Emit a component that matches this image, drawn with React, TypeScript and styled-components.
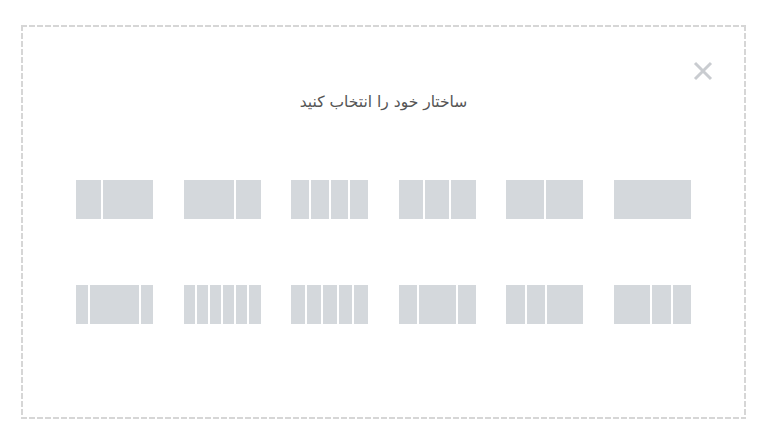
import * as React from 'react'
import styled, { createGlobalStyle } from 'styled-components'

// column spans for each preset, left to right
const layouts: number[][] = [
  [1, 2],
  [2, 1],
  [1, 1, 1, 1],
  [1, 1, 1],
  [1, 1],
  [1],
  [1, 4, 1],
  [1, 1, 1, 1, 1, 1],
  [1, 1, 1, 1, 1],
  [1, 2, 1],
  [1, 1, 2],
  [2, 1, 1],
]

const Global = createGlobalStyle`
  html, body {
    margin: 0;
    padding: 0;
    background: #fff;
  }
  body {
    font-family: "DejaVu Sans", "Liberation Sans", Arial, sans-serif;
  }
`

const dash = '#d6d6d6'

const Frame = styled.div`
  position: relative;
  box-sizing: border-box;
  width: 725px;
  height: 394px;
  margin: 25px 0 0 21px;
  padding: 67px 2px 2px;
  background:
    repeating-linear-gradient(90deg, ${dash} 0 6px, transparent 6px 8px) left top / 100% 2px no-repeat,
    repeating-linear-gradient(90deg, ${dash} 0 6px, transparent 6px 8px) left bottom / 100% 2px no-repeat,
    repeating-linear-gradient(180deg, ${dash} 0 6px, transparent 6px 8px) left top / 2px 100% no-repeat,
    repeating-linear-gradient(180deg, ${dash} 0 6px, transparent 6px 8px) right top / 2px 100% no-repeat;
`

const Title = styled.div`
  direction: rtl;
  text-align: center;
  font-size: 15.5px;
  line-height: 20px;
  color: #555;
`

const Close = styled.button`
  position: absolute;
  top: 36px;
  right: 32px;
  width: 22px;
  height: 20px;
  padding: 0;
  border: 0;
  background: none;
  cursor: pointer;
  display: flex;
  align-items: center;
  justify-content: center;
`

const Grid = styled.div`
  display: grid;
  grid-template-columns: repeat(6, 77px);
  column-gap: 30.6px;
  row-gap: 66px;
  justify-content: center;
  margin-top: 68px;
`

const Tile = styled.div`
  display: flex;
  gap: 2px;
  height: 39px;
  cursor: pointer;
`

const Col = styled.div<{ $span: number }>`
  flex: ${(p) => p.$span} 1 0;
  background: #d4d8dc;
`

export default function App() {
  return (
    <>
      <Global />
      <Frame>
        <Close aria-label="close">
          <svg width="22" height="20" viewBox="0 0 22 20">
            <path d="M3 2 L19 18 M19 2 L3 18" stroke="#c9ccd0" strokeWidth="3" />
          </svg>
        </Close>
        <Title>ساختار خود را انتخاب کنید</Title>
        <Grid>
          {layouts.map((cols, i) => (
            <Tile key={i}>
              {cols.map((s, j) => (
                <Col key={j} $span={s} />
              ))}
            </Tile>
          ))}
        </Grid>
      </Frame>
    </>
  )
}
